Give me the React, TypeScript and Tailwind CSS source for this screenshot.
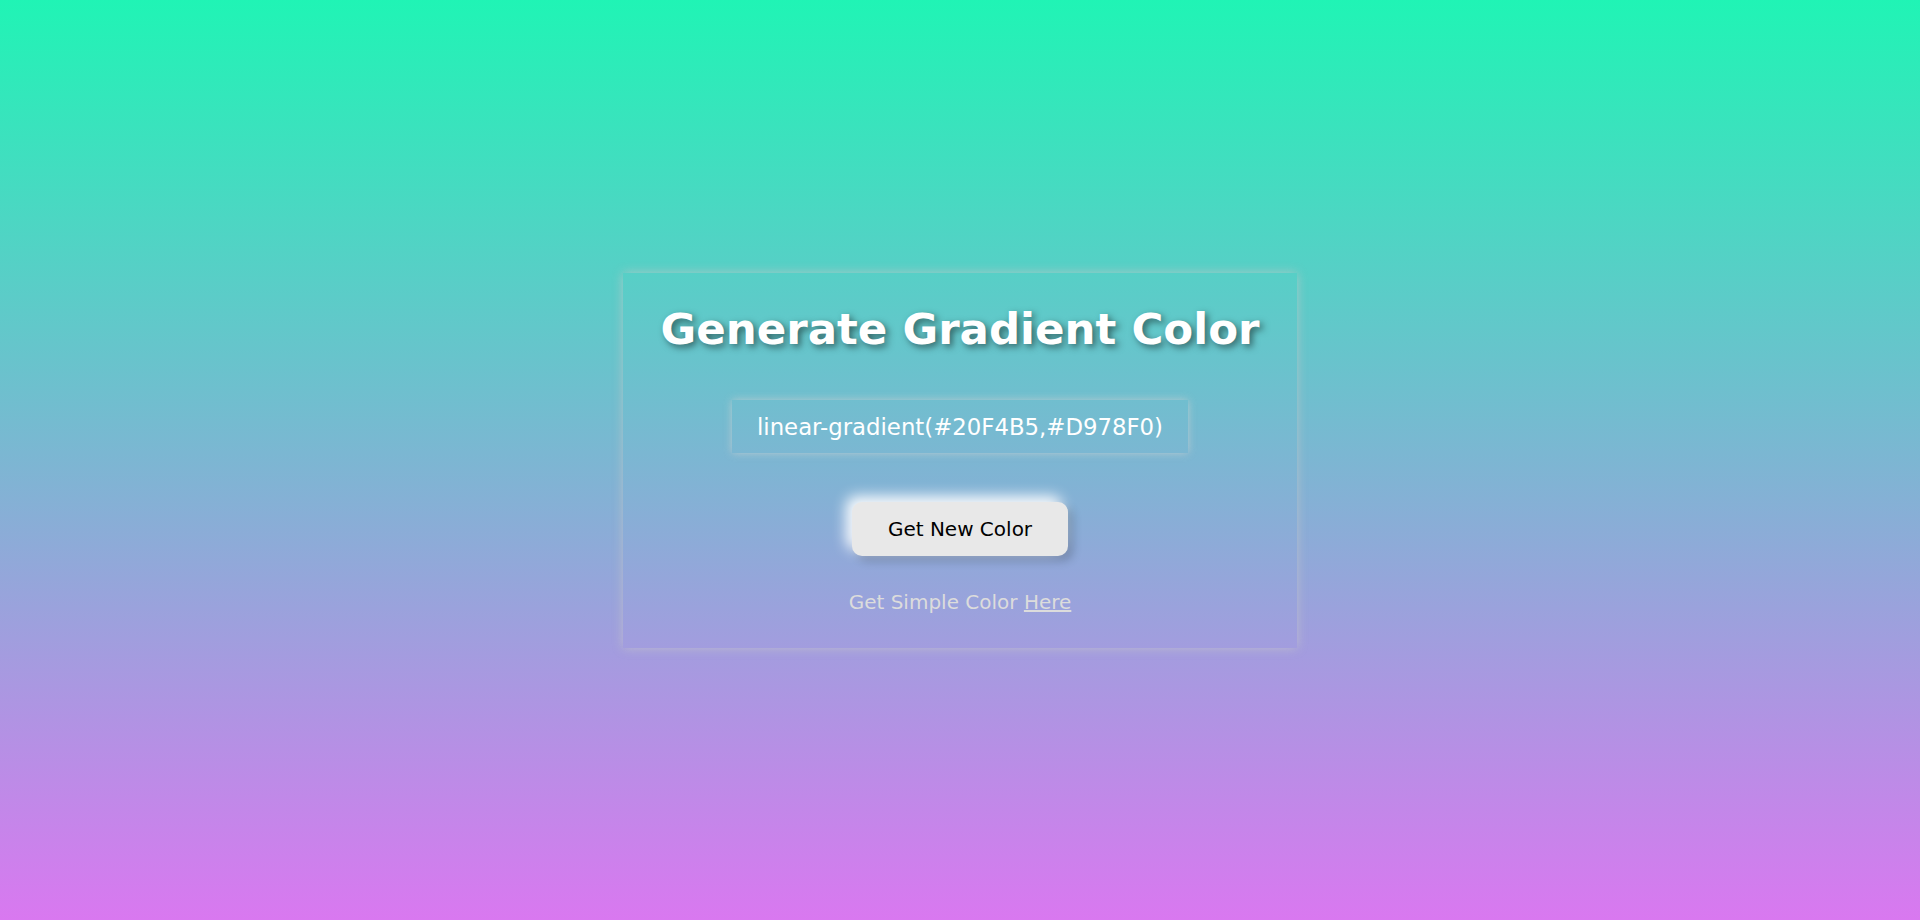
import React, { useState } from 'react';

const App: React.FC = () => {
  const [colors] = useState(['#20F4B5', '#D978F0']);
  const gradient = `linear-gradient(${colors[0]},${colors[1]})`;

  return (
    <div
      className="h-screen w-full flex items-center justify-center font-['DejaVu_Sans',Verdana,sans-serif]"
      style={{ backgroundImage: gradient }}
    >
      <div className="w-[674px] h-[375px] flex flex-col items-center pt-[31px] shadow-[0_0_10px_rgba(200,200,200,0.7)]">
        <h1 className="text-[43.5px] font-bold text-white leading-[1.164] [text-shadow:3px_3px_7px_rgba(0,0,0,0.5)]">
          Generate Gradient Color
        </h1>

        <div className="mt-[46px] h-[53px] w-[456px] flex items-center justify-center text-[22.8px] text-white shadow-[0_0_8px_rgba(210,210,210,0.7)]">
          {gradient}
        </div>

        <button className="mt-[49px] h-[54px] w-[216px] rounded-[10px] bg-[#e8e8e8] text-[20px] text-black shadow-[-6px_-6px_14px_rgba(255,255,255,0.95),5px_5px_10px_rgba(0,0,0,0.2)]">
          Get New Color
        </button>

        <p className="mt-[35px] text-[20px] text-[#dcdcdc] leading-[1.164]">
          Get Simple Color <a href="#" className="underline">Here</a>
        </p>
      </div>
    </div>
  );
};

export default App;
